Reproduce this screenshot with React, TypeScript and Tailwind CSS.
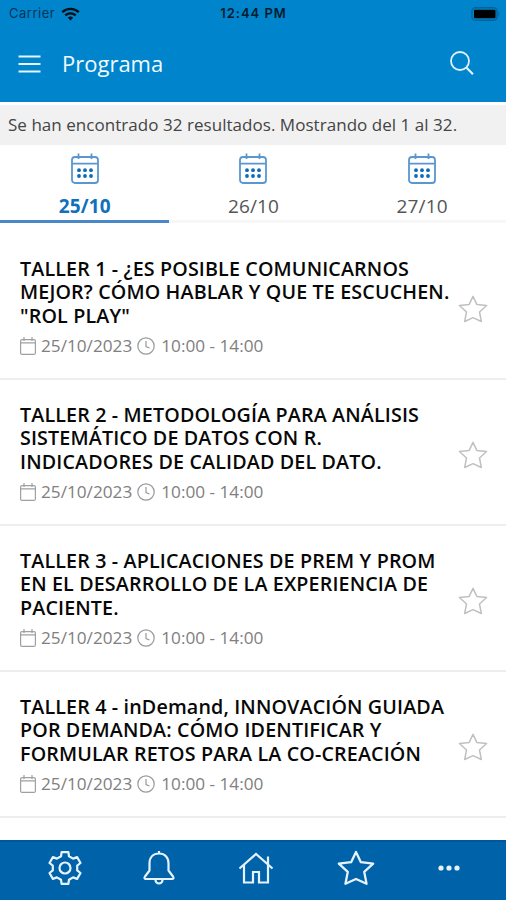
import { useState } from "react";

const days = ["25/10", "26/10", "27/10"];

const workshops = [
  {
    id: 1,
    lines: ["TALLER 1 - ¿ES POSIBLE COMUNICARNOS", "MEJOR? CÓMO HABLAR Y QUE TE ESCUCHEN.", '"ROL PLAY"'],
  },
  {
    id: 2,
    lines: ["TALLER 2 - METODOLOGÍA PARA ANÁLISIS", "SISTEMÁTICO DE DATOS CON R.", "INDICADORES DE CALIDAD DEL DATO."],
  },
  {
    id: 3,
    lines: ["TALLER 3 - APLICACIONES DE PREM Y PROM", "EN EL DESARROLLO DE LA EXPERIENCIA DE", "PACIENTE."],
  },
  {
    id: 4,
    lines: ["TALLER 4 - inDemand, INNOVACIÓN GUIADA", "POR DEMANDA: CÓMO IDENTIFICAR Y", "FORMULAR RETOS PARA LA CO-CREACIÓN"],
  },
];

const starPath = "M16 2.5l4.1 8.6 10.4 1.2-7.6 6.9 2 10.1L16 25.2l-8.9 4.1 2-10.1-7.6-6.9 10.4-1.2z";

function StatusBar() {
  return (
    <div className="flex h-[26px] items-center justify-between pl-[9px] pr-[6px] pt-px font-['Inter',sans-serif] text-[13px] text-[#06345a]">
      <div className="flex w-[100px] items-center gap-[6px]">
        <span className="tracking-[0.5px]">Carrier</span>
        <svg width="19" height="14" viewBox="0 0 19 14" fill="none" stroke="#001018" strokeWidth="2.3">
          <path d="M1.2 5.2a12 12 0 0 1 16.6 0M4.3 8.4a7.5 7.5 0 0 1 10.4 0" />
          <path d="M9.5 13.4L6.8 10.7a3.9 3.9 0 0 1 5.4 0z" fill="#001018" stroke="none" />
        </svg>
      </div>
      <span className="-ml-[2px] font-semibold tracking-[0.95px] text-[#001c2e]">12:44 PM</span>
      <div className="flex w-[100px] justify-end">
        <svg width="30" height="14" viewBox="0 0 30 14">
          <rect x="2" y="0.8" width="25" height="12.4" rx="3.5" fill="none" stroke="#04629a" strokeWidth="1.4" />
          <rect x="4" y="2.8" width="21.5" height="8.4" rx="1" fill="#000" />
          <path d="M28.3 4.5c1.2.6 1.2 4.4 0 5z" fill="#04629a" />
        </svg>
      </div>
    </div>
  );
}

function DayIcon() {
  return (
    <svg className="ml-px" width="28" height="31" viewBox="0 0 28 31" fill="none" stroke="#5a97d0" strokeWidth="1.8">
      <rect x="1" y="4" width="26" height="26" rx="3" />
      <path d="M1 10.7h26M7.5 0.5V6M20.5 0.5V6" />
      <g fill="#0a6cb8" stroke="none">
        <circle cx="8" cy="17.2" r="1.9" />
        <circle cx="14" cy="17.2" r="1.9" />
        <circle cx="20" cy="17.2" r="1.9" />
        <circle cx="8" cy="23" r="1.9" />
        <circle cx="14" cy="23" r="1.9" />
        <circle cx="20" cy="23" r="1.9" />
      </g>
    </svg>
  );
}

export default function App() {
  const [day, setDay] = useState("25/10");
  const [favs, setFavs] = useState<number[]>([]);

  const toggleFav = (id: number) => {
    setFavs((prev) => (prev.includes(id) ? prev.filter((f) => f !== id) : [...prev, id]));
  };

  return (
    <div className="flex h-[900px] w-[506px] flex-col overflow-hidden bg-white font-['Open_Sans',sans-serif]">
      <header className="h-[102px] shrink-0 bg-[#0084cb]">
        <StatusBar />
        <div className="flex h-[76px] items-center pl-[18px] pr-[31px] text-white">
          <svg width="24" height="20" viewBox="0 0 24 20" stroke="#e6f5ff" strokeWidth="2">
            <path d="M0.5 2.5h22M0.5 10h22M0.5 17.5h22" />
          </svg>
          <h1 className="-mt-[3px] ml-5 text-[22px] leading-8 text-[#f2faff]">Programa</h1>
          <svg className="-mt-[2px] ml-auto" width="26" height="26" viewBox="0 0 26 26" fill="none" stroke="#e0f2ff" strokeWidth="1.8">
            <circle cx="11" cy="11" r="9" />
            <path d="M17.3 17.5l6.7 6.7" strokeWidth="2.2" />
          </svg>
        </div>
      </header>

      {/* Resultados */}
      <div className="mt-[3px] flex h-10 shrink-0 items-center bg-[#f1f1f1] pl-2 text-[17px] tracking-[0.04px] text-[#444]">
        <p className="whitespace-nowrap">Se han encontrado 32 resultados. Mostrando del 1 al 32.</p>
      </div>

      {/* Días */}
      <div className="grid h-[78px] shrink-0 grid-cols-3">
        {days.map((d) => (
          <button
            key={d}
            onClick={() => setDay(d)}
            className={
              "flex flex-col items-center border-b-[3px] pt-2 text-[19px] leading-7 " +
              (d === day ? "border-[#4a88c9] font-bold text-[#0f70bb]" : "border-[#f7f7f7] text-[#555]")
            }
          >
            <DayIcon />
            <span className="ml-px mt-[8px] tracking-[0.15px]">{d}</span>
          </button>
        ))}
      </div>

      {/* Talleres */}
      <main className="min-h-0 flex-1 overflow-hidden pt-[11px]">
        {workshops.map((w) => (
          <article key={w.id} className="flex h-[146px] justify-between border-b-2 border-[#eeeeee] pl-5 pr-[18px] pt-[23px]">
            <div>
              <h2 className="text-[19.7px] font-semibold leading-[23.3px] tracking-[0.14px] text-[#080808]">
                {w.lines.map((l) => (
                  <span key={l} className="block whitespace-nowrap">
                    {l}
                  </span>
                ))}
              </h2>
              <div className="mt-[6px] flex h-[26px] items-center text-[17.2px] text-[#808080]">
                <svg width="16" height="18" viewBox="0 0 16 18" fill="none" stroke="#a0a0a0" strokeWidth="1.2">
                  <rect x="0.6" y="2.6" width="14.8" height="14.8" rx="1.5" />
                  <path d="M0.6 5.8h14.8M4 0v4M12 0v4" />
                </svg>
                <span className="ml-[5px]">25/10/2023</span>
                <svg className="ml-[5px]" width="18" height="18" viewBox="0 0 18 18" fill="none" stroke="#999" strokeWidth="1.2">
                  <circle cx="9" cy="9" r="8.2" />
                  <path d="M9 4v5.5l3.5 1.5" />
                </svg>
                <span className="ml-[6px]">10:00 - 14:00</span>
              </div>
            </div>
            <button onClick={() => toggleFav(w.id)} className="mt-[37px] h-[30px] w-[30px]">
              <svg width="30" height="30" viewBox="0 0 32 32" fill={favs.includes(w.id) ? "#bbb" : "none"} stroke="#c0c0c0" strokeWidth="1.6" strokeLinejoin="round">
                <path d={starPath} />
              </svg>
            </button>
          </article>
        ))}
      </main>

      {/* Barra inferior */}
      <nav className="flex h-[60px] shrink-0 items-center border-t-2 border-[#00579c] bg-[#0063a9] pb-[6px] pl-[47px]">
        <svg width="36" height="36" viewBox="-18 -18 36 36" fill="none" stroke="#e6f3ff" strokeWidth="2.2" strokeLinejoin="round">
          <path d="M-3.4 -15.9H3.4L4 -11.7L8.1 -9.4L12.1 -10.9L15.5 -5L12.2 -2.4V2.4L15.5 5L12.1 10.9L8.1 9.4L4 11.7L3.4 15.9H-3.4L-4 11.7L-8.1 9.4L-12.1 10.9L-15.5 5L-12.2 2.4V-2.4L-15.5 -5L-12.1 -10.9L-8.1 -9.4L-4 -11.7Z" />
          <circle r="5.5" />
        </svg>
        <svg className="ml-[59px]" width="34" height="36" viewBox="0 0 34 36" fill="none" stroke="#e6f3ff" strokeWidth="2.2" strokeLinejoin="round">
          <path d="M17 3.5c-6 0-9.5 4-9.5 10v7L3 26.5c-1 1.5-.5 2.5 1 2.5h26c1.5 0 2-1 1-2.5l-4.5-6v-7c0-6-3.5-10-9.5-10zM17 1v2.5M13.5 30a3.5 3.5 0 0 0 7 0" />
        </svg>
        <svg className="ml-[62px]" width="36" height="36" viewBox="0 0 36 36" fill="none" stroke="#e6f3ff" strokeWidth="2.2">
          <path d="M1.5 18.5L18 4l16.5 14.5M6 15v17.5h9V22h6v10.5h9V6.5" />
        </svg>
        <svg className="ml-[63px]" width="38" height="38" viewBox="0 0 32 32" fill="none" stroke="#e6f3ff" strokeWidth="1.9" strokeLinejoin="round">
          <path d={starPath} />
        </svg>
        <svg className="ml-[63px]" width="22" height="6" viewBox="0 0 22 6" fill="#e6f3ff">
          <circle cx="3" cy="3" r="2.6" />
          <circle cx="11" cy="3" r="2.6" />
          <circle cx="19" cy="3" r="2.6" />
        </svg>
      </nav>
    </div>
  );
}
